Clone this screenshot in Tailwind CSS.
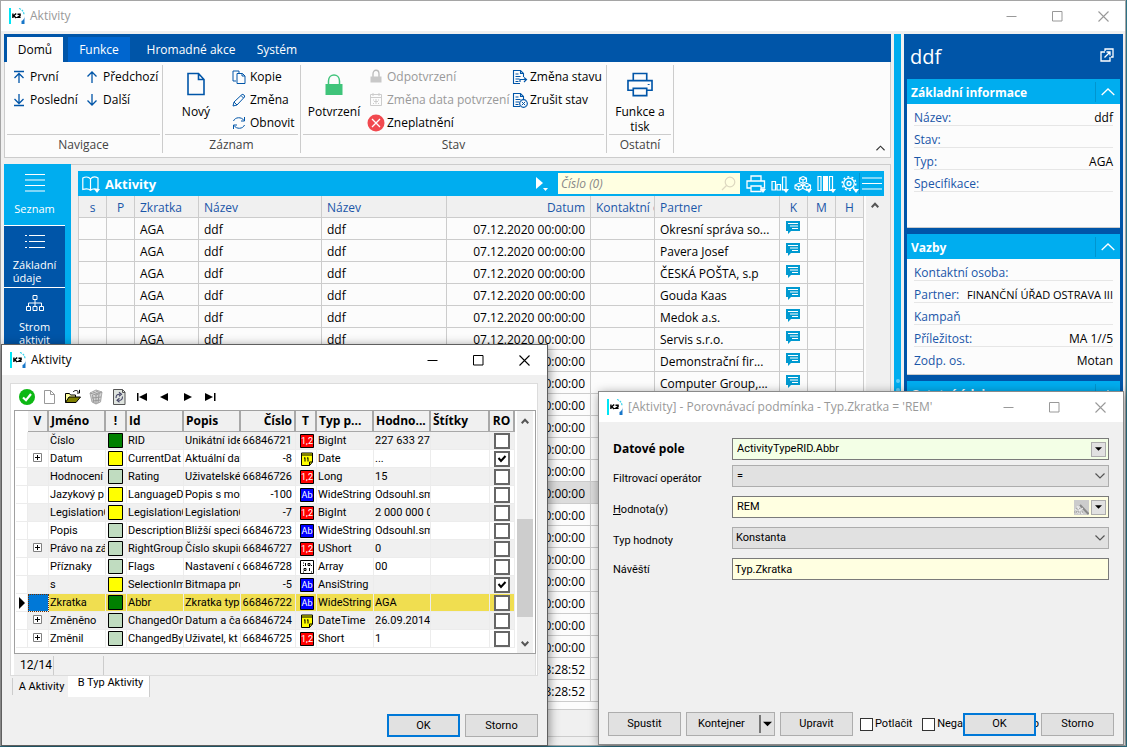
<!DOCTYPE html>
<html lang="cs">
<head>
<meta charset="utf-8">
<title>Aktivity</title>
<meta name="viewport" content="width=device-width, initial-scale=1">
<script src="https://cdn.jsdelivr.net/npm/@tailwindcss/browser@4"></script>
</head>
<body class="relative h-screen overflow-hidden bg-[#2d7286] font-['Open_Sans','Noto_Sans',sans-serif] text-[12px] leading-4 text-black">

<svg class="hidden" aria-hidden="true">
  <symbol id="k2" viewBox="0 0 16 16">
    <path d="M0 0h2v16H0z" fill="#00e5f5"/>
    <path d="M10 .5c3 1 5 3 5 6.500" fill="none" stroke="#2fd0ea" stroke-width="1.200" stroke-dasharray="2 1"/>
    <path d="M15.500 8c0 2.500-1 4-3 5v3h3z" fill="#1877c9"/>
    <path d="M3.900 5.500v4.500M7.200 5.500L4.700 7.700l2.500 2.300M8.500 6.200h2.600v1.400l-2.500 1.800h3" fill="none" stroke="#000" stroke-width="1.400"/>
  </symbol>
  <symbol id="up" viewBox="0 0 14 14"><path d="M7 13V2M2.500 6.500L7 2l4.500 4.500" fill="none" stroke="#0055a8" stroke-width="1.300"/></symbol>
  <symbol id="down" viewBox="0 0 14 14"><path d="M7 1v11M2.500 7.500L7 12l4.500-4.500" fill="none" stroke="#0055a8" stroke-width="1.300"/></symbol>
  <symbol id="first" viewBox="0 0 14 14"><path d="M2 1.500h10M7 13V3.500M2.500 8L7 3.500 11.500 8" fill="none" stroke="#0055a8" stroke-width="1.300"/></symbol>
  <symbol id="last" viewBox="0 0 14 14"><path d="M2 12.500h10M7 1v9.500M2.500 6L7 10.500 11.500 6" fill="none" stroke="#0055a8" stroke-width="1.300"/></symbol>
  <symbol id="print" viewBox="0 0 28 26"><path d="M7 8V1.500h14V8M6.500 19H1.500V9h25v10h-5M7 17h14v7.500H7z" fill="none" stroke="currentColor" stroke-width="1.700"/><path d="M22 13h2" stroke="currentColor"/></symbol>
  <symbol id="docl" viewBox="0 0 16 16"><path d="M11.500 8V4.500L8.500 1.500H1.500v13H8M8.500 1.500v3h3M3.500 5h3M3.500 7.500h5M3.500 10h4M3.500 12.500h3" fill="none" stroke="#0055a8" stroke-width="1.100"/></symbol>
  <symbol id="note" viewBox="0 0 14 13"><path d="M0 0h14v10H5l-3 3v-3H0z" fill="#0099d0"/><path d="M2 2.500h10M4 5h8M6 7.500h6" stroke="#fff"/></symbol>
  <symbol id="caretup" viewBox="0 0 14 8"><path d="M.7 7L7 1l6.300 6" fill="none" stroke="#fff" stroke-width="1.300"/></symbol>
  <symbol id="min" viewBox="0 0 11 11"><path d="M.5 5.500h10" stroke="currentColor"/></symbol>
  <symbol id="max" viewBox="0 0 11 11"><path d="M.5.5h9.500V10H.5z" fill="none" stroke="currentColor"/></symbol>
  <symbol id="close" viewBox="0 0 11 11"><path d="M.5.5l10 10M10.500.5l-10 10" stroke="currentColor" stroke-width="1.100"/></symbol>
  <symbol id="chev" viewBox="0 0 10 6"><path d="M.5.5L5 5 9.500.5" fill="none" stroke="currentColor" stroke-width="1.200"/></symbol>
  <symbol id="chevb" viewBox="0 0 8 6"><path d="M.7.800L4 4.200 7.300.8" fill="none" stroke="currentColor" stroke-width="2"/></symbol>
  <symbol id="tri" viewBox="0 0 8 4"><path d="M0 0h8L4 4z" fill="currentColor"/></symbol>
</svg>

<!-- Main window -->
<div class="mr-px flex h-[calc(100%-1px)] flex-col border border-[#a5a5a5] bg-[#f0f0f0]">
  <header class="flex h-[30px] shrink-0 items-center bg-white pl-2 text-[#999]">
    <svg class="size-4"><use href="#k2"/></svg>
    <h1 class="ml-[5px] flex-1">Aktivity</h1>
    <div class="flex gap-[35px] pr-4">
      <button aria-label="Minimalizovat"><svg class="size-[11px]"><use href="#min"/></svg></button>
      <button aria-label="Maximalizovat"><svg class="size-[11px]"><use href="#max"/></svg></button>
      <button aria-label="Zavřít"><svg class="size-[11px]"><use href="#close"/></svg></button>
    </div>
  </header>

  <div class="flex min-h-0 flex-1 pt-[3px] pr-[2px] pl-[3px]">
    <div class="flex min-w-0 flex-1 flex-col">
      <!-- Ribbon -->
      <nav class="flex h-7 shrink-0 items-stretch bg-[#0055a8] pt-[3px] pl-[3px] text-white">
        <button class="w-14 bg-[#fcfcfc] text-black">Domů</button>
        <button class="ml-[5px] w-[62px] bg-[#0066cf]">Funkce</button>
        <button class="w-[122px]">Hromadné akce</button>
        <button class="w-[50px]">Systém</button>
      </nav>
      <div class="flex h-[96px] shrink-0 items-stretch border-r border-b border-l border-[#ccc] bg-[#fcfcfc] pt-[3px] pb-1 pl-[2px]">
        <section class="flex w-[156px] flex-col border-r border-[#ccc] pr-[2px]">
          <div class="grid flex-1 grid-cols-[73px_1fr] content-start gap-y-[7px] border-b border-[#ccc] pt-1 pl-[5px]">
            <button class="flex items-center gap-1"><svg class="size-[14px]"><use href="#first"/></svg>První</button>
            <button class="flex items-center gap-1"><svg class="size-[14px]"><use href="#up"/></svg>Předchozí</button>
            <button class="flex items-center gap-1"><svg class="size-[14px]"><use href="#last"/></svg>Poslední</button>
            <button class="flex items-center gap-1"><svg class="size-[14px]"><use href="#down"/></svg>Další</button>
          </div>
          <div class="pt-[2px] text-center text-[#444]">Navigace</div>
        </section>
        <section class="flex w-[138px] flex-col border-r border-[#ccc] px-[2px]">
          <div class="flex flex-1 border-b border-[#ccc]">
            <button class="flex w-[62px] flex-col items-center pt-[7px]">
              <svg class="mb-2 h-6 w-[18px]" viewBox="0 0 18 24"><path d="M1 1.500h10.500l5.500 6v15H1zM11.500 1.500v6H17" fill="none" stroke="#0055a8" stroke-width="1.600"/></svg>Nový
            </button>
            <div class="flex flex-col gap-[7px] pt-1 pl-[5px]">
              <button class="flex items-center gap-1"><svg class="size-[14px]" viewBox="0 0 14 14"><path d="M4 11H1V1h6v2M5 3.500h5.500L13 6v7.500H5zM10 3.500V6h3" fill="none" stroke="#0055a8"/></svg>Kopie</button>
              <button class="flex items-center gap-1"><svg class="size-[14px]" viewBox="0 0 14 14"><path d="M1 13l1-4L10 1.500c1-.8 3.300 1.300 2.500 2.500L5 12zM2 9l3 3M9 2.500L11.500 5" fill="none" stroke="#0055a8"/></svg>Změna</button>
              <button class="flex items-center gap-1"><svg class="size-[14px]" viewBox="0 0 14 14"><path d="M1.500 5C3 1 9.500.5 12 4.500M12.500 1v4H9M12.500 9C11 13 4.500 13.500 2 9.500M1.500 13V9H5" fill="none" stroke="#0055a8"/></svg>Obnovit</button>
            </div>
          </div>
          <div class="pt-[2px] text-center text-[#444]">Záznam</div>
        </section>
        <section class="flex w-[306px] flex-col border-r border-[#ccc] px-[2px]">
          <div class="flex flex-1 border-b border-[#ccc]">
            <button class="flex w-[62px] flex-col items-center pt-[8px]">
              <svg class="mb-[7px] h-6 w-[18px]" viewBox="0 0 18 24"><path d="M3.500 11V8c0-8 11-8 11 0v3" fill="none" stroke="#3fc47a" stroke-width="1.500"/><path d="M.5 11h17v11H.5z" fill="#3fc47a"/></svg>Potvrzení
            </button>
            <div class="flex w-[147px] flex-col gap-[7px] pt-1 pl-[3px]">
              <button class="flex items-center gap-[3px] text-[#999]" disabled><svg class="size-4" viewBox="0 0 16 16"><path d="M5 8V5c0-5 6-5 6 0v3" fill="none" stroke="#bbb" stroke-width="1.300"/><path d="M2.500 7.500h11v6h-11z" fill="#c8c8c8"/></svg>Odpotvrzení</button>
              <button class="flex items-center gap-[3px] whitespace-nowrap text-[#999]" disabled><svg class="size-4 shrink-0" viewBox="0 0 16 16"><path d="M2.500 2.500h11v11h-11zM2.500 5.500h11M5 1v3M11 1v3" fill="none" stroke="#ccc"/><path d="M5 8h1M10 8h1M8 7v5M6 9.500h4M5 11.500h1M10 11.500h1" stroke="#ccc"/></svg>Změna data potvrzení</button>
              <button class="flex items-center gap-[3px]"><svg class="size-4 overflow-visible" viewBox="0 0 16 16"><circle cx="8" cy="8" r="8.500" fill="#f1494f"/><path d="M4 4l8 8M12 4l-8 8" stroke="#fff" stroke-width="1.300"/></svg>Zneplatnění</button>
            </div>
            <div class="flex flex-col gap-[7px] pt-1">
              <button class="flex items-center gap-[2px]"><svg class="size-4" viewBox="0 0 16 16"><use href="#docl"/><path d="M8 13V10.500h6M12 8.500l2.500 2-2.500 2.500" fill="none" stroke="#0055a8" stroke-width="1.200"/></svg>Změna stavu</button>
              <button class="flex items-center gap-[2px]"><svg class="size-4" viewBox="0 0 16 16"><use href="#docl"/><circle cx="11.500" cy="11.500" r="3.800" fill="#fff" stroke="#0055a8" stroke-width="1.200"/><path d="M9.700 9.700l3.600 3.600M13.300 9.700l-3.600 3.600" stroke="#0055a8"/></svg>Zrušit stav</button>
            </div>
          </div>
          <div class="pt-[2px] text-center text-[#444]">Stav</div>
        </section>
        <section class="flex w-[67px] flex-col border-r border-[#ccc] px-[2px]">
          <div class="flex flex-1 border-b border-[#ccc]">
            <button class="flex w-full flex-col items-center pt-[7px] leading-[15px]">
              <svg class="mb-[7px] h-[25px] w-7 text-[#0055a8]"><use href="#print"/></svg>Funkce a tisk
            </button>
          </div>
          <div class="pt-[2px] text-center text-[#444]">Ostatní</div>
        </section>
        <button class="mt-auto mr-[5px] mb-[2px] ml-auto" aria-label="Sbalit pás"><svg class="h-[6px] w-[9px] rotate-180 text-[#333]"><use href="#chev"/></svg></button>
      </div>

      <!-- Workspace -->
      <div class="mt-[6px] flex min-h-0 flex-1">
        <aside class="flex w-[67px] shrink-0 flex-col bg-[#00adef] pr-[6px] text-[11px] leading-[13px] text-white">
          <button class="flex h-[61px] shrink-0 flex-col items-center pt-[10px]">
            <svg class="mb-[10px] h-[18px] w-5" viewBox="0 0 20 18"><path d="M0 .5h20M0 6h20M0 11.500h20M0 17h20" stroke="#fff" stroke-width="1.200"/></svg>Seznam
          </button>
          <button class="flex h-[62px] shrink-0 flex-col items-center border-t border-white bg-[#0055a8] pt-2 text-left">
            <svg class="mb-[9px] h-[15px] w-5" viewBox="0 0 20 15"><path d="M4 1.500h16M4 7.500h16M4 13.500h16M0 1.500h2M0 7.500h2M0 13.500h2" stroke="#fff" stroke-width="1.200"/></svg><span>Základní<br>údaje</span>
          </button>
          <button class="flex flex-1 flex-col items-center border-t border-white bg-[#0055a8] pt-[7px]">
            <svg class="mb-[9px] h-4 w-[18px]" viewBox="0 0 18 16"><path d="M7 .5h4v4H7zM.5 11.500h4v4h-4zM7 11.500h4v4H7zM13.500 11.500h4v4h-4zM9 4.500v7M2.500 11.500V8h13v3.500" fill="none" stroke="#fff"/></svg><span>Strom<br>aktivit</span>
          </button>
        </aside>

        <main class="flex min-w-0 flex-1 flex-col border-t border-r border-[#ccc] pt-[6px] pr-[6px] pl-[7px]">
          <div class="flex h-[25px] shrink-0 items-center bg-[#00adef] pl-1 text-white">
            <svg class="mt-px h-[17px] w-[19px]" viewBox="0 0 19 17"><path d="M8.500 3C6.500.5 3 .8.800 2v11.500c3-1 6-.8 7.700.8 1.700-1.600 4-1.800 7.500-.8V2C13.800.8 10.500.5 8.500 3zV14" fill="none" stroke="#fff" stroke-width="1.200"/><path d="M12 13h6l-3 4z" fill="#fff"/></svg>
            <h2 class="ml-1 flex-1 text-[13px] font-bold">Aktivity</h2>
            <button aria-label="Spustit filtr" class="mr-[10px]"><svg class="h-[15px] w-3" viewBox="0 0 12 15"><path d="M0 1l7 6-7 6z" fill="#fff"/><path d="M7 12h5l-2.500 3z" fill="#fff"/></svg></button>
            <label class="mr-[6px] flex h-[21px] w-[182px] items-center bg-[#ffffe1] pr-1">
              <input aria-label="Vyhledat" placeholder="Číslo (0)" class="w-full min-w-0 bg-transparent pl-[3px] italic outline-none placeholder:text-[#888]">
              <svg class="size-[15px] shrink-0" viewBox="0 0 15 15"><circle cx="9" cy="6" r="4.800" fill="none" stroke="#ddd8c0" stroke-width="1.200"/><path d="M5.500 9.500L1 14" stroke="#ddd8c0" stroke-width="1.200"/></svg>
            </label>
            <div class="flex items-center gap-[5px]">
              <button aria-label="Tisk"><svg class="block h-[18px] w-5" viewBox="0 0 20 18"><path d="M5 6V1h10v5M4.500 13H1V6h17.500v7H15M5 11h10v5.500H5z" fill="none" stroke="#fff" stroke-width="1.300"/><path d="M14 14h6l-3 4z" fill="#fff"/></svg></button>
              <button aria-label="Grafy"><svg class="block h-[18px] w-[18px]" viewBox="0 0 18 18"><path d="M1 6.500h3.500V15H1zM6 9.500h3.500V15H6zM11.500 2H15v13h-3.500z" fill="none" stroke="#fff" stroke-width="1.200"/><path d="M12 14h6l-3 4z" fill="#fff"/></svg></button>
              <button aria-label="Krychle"><svg class="block h-[18px] w-[18px]" viewBox="0 0 18 18"><path d="M9 1.500l3.500 1.700v3.500L9 8.500 5.500 6.700V3.200zM4.700 8.300L8.500 10v3.500l-3.800 1.800L1 13.500V10zM12.800 8.300L16.500 10v3.500l-3.700 1.800L9 13.500V10zM5.500 3.200L9 5l3.500-1.800M9 5v3M1 10l3.700 1.800L8.500 10M4.700 11.800v3M9 10l3.800 1.800L16.500 10M12.800 11.800v3" fill="none" stroke="#fff" stroke-width="1.100"/><path d="M12 14h6l-3 4z" fill="#fff"/></svg></button>
              <button aria-label="Sloupce"><svg class="block h-[18px] w-[19px]" viewBox="0 0 19 18"><path d="M1 1.500h3v14H1zM12.500 1.500h3v14h-3z" fill="none" stroke="#fff" stroke-width="1.200"/><path d="M6 1h5v15H6zM13 14h6l-3 4z" fill="#fff"/></svg></button>
              <button aria-label="Nastavení"><svg class="block h-[18px] w-[18px]" viewBox="0 0 18 18"><circle cx="8" cy="8.500" r="5.300" fill="none" stroke="#fff" stroke-width="1.300"/><circle cx="8" cy="8.500" r="6.800" fill="none" stroke="#fff" stroke-width="1.500" stroke-dasharray="2 2.300"/><circle cx="8" cy="8.500" r="2" fill="none" stroke="#fff" stroke-width="1.300"/><path d="M12 14h6l-3 4z" fill="#fff"/></svg></button>
            </div>
            <button aria-label="Nabídka" class="border-l border-[#0095cf] py-1 pr-[2px] pl-[2px]"><svg class="block h-[13px] w-5" viewBox="0 0 20 13"><path d="M0 1h20M0 6.500h20M0 12h20" stroke="#fff" stroke-width="1.200"/></svg></button>
          </div>
          <div class="flex min-h-0 flex-1 overflow-hidden bg-[#fcfcfc]">
            <div class="min-w-0 flex-1 border-l border-[#ccc]">
              <table class="w-full table-fixed border-separate border-spacing-0">
                <colgroup><col class="w-7"><col class="w-7"><col class="w-16"><col><col class="w-[125px]"><col class="w-36"><col class="w-16"><col class="w-[125px]"><col class="w-7"><col class="w-7"><col class="w-7"></colgroup>
                <thead class="text-[#1a56a8]">
                  <tr class="h-[22px] bg-[#f0f0f0] text-left whitespace-nowrap [&>th]:overflow-hidden [&>th]:border-r [&>th]:border-b [&>th]:border-[#ccc] [&>th]:px-[5px] [&>th]:pt-[2px] [&>th]:pb-0 [&>th]:font-normal">
                    <th class="text-center">s</th><th class="text-center">P</th><th>Zkratka</th><th>Název</th><th>Název</th><th class="text-right">Datum</th><th>Kontaktní osoba</th><th>Partner</th><th class="text-center">K</th><th class="text-center">M</th><th class="text-center">H</th>
                  </tr>
                </thead>
                <tbody id="activities"></tbody>
              </table>
            </div>
            <div class="ml-[2px] flex w-[18px] flex-col items-center bg-[#f0f0f0] pt-[6px] text-[#555]"><svg class="h-[6px] w-2 rotate-180"><use href="#chevb"/></svg></div>
          </div>
          <div class="mb-2 h-7 shrink-0 border-y border-[#ccc]"></div>
        </main>
      </div>
    </div>

    <div class="mx-[3px] flex w-[7px] shrink-0 flex-col items-center justify-center gap-[5px] bg-[#00adef]">
      <i class="size-1 rounded-full bg-[#5fcdf7]"></i><i class="size-1 rounded-full bg-[#5fcdf7]"></i><i class="size-1 rounded-full bg-[#5fcdf7]"></i>
    </div>

    <!-- Detail panel -->
    <aside class="flex w-[219px] shrink-0 flex-col bg-[#0055a8] px-[3px]">
      <div class="flex h-[45px] items-center justify-between pr-[6px] pl-[3px] text-white">
        <h2 class="text-xl">ddf</h2>
        <button aria-label="Otevřít v novém okně" class="pb-1"><svg class="size-[14px]" viewBox="0 0 14 14"><path d="M5 3V1h8v8h-2M5 4H1v9h9V9M4.500 9.500L10 4M6.500 4H10v3.500" fill="none" stroke="#fff" stroke-width="1.300"/></svg></button>
      </div>
      <section class="mb-[6px] border-b border-[#ccc] bg-[#fcfcfc] pb-[35px]">
        <div class="flex h-[25px] items-center bg-[#00adef] pr-[5px] pl-1 text-white"><h3 class="flex-1 pt-[2px] font-bold">Základní informace</h3><button class="h-5 border-l border-[#0095cf] pl-[5px]" aria-label="Sbalit"><svg class="h-2 w-[14px]"><use href="#caretup"/></svg></button></div>
        <dl class="px-[7px] [&>div]:flex [&>div]:h-[22px] [&>div]:items-center [&>div]:justify-between [&>div]:border-b [&>div]:border-[#e6e6e6] [&>div]:pt-[7px] [&_dt]:text-[#1a56a8]">
          <div><dt>Název:</dt><dd>ddf</dd></div>
          <div><dt>Stav:</dt><dd></dd></div>
          <div><dt>Typ:</dt><dd>AGA</dd></div>
          <div><dt>Specifikace:</dt><dd></dd></div>
        </dl>
      </section>
      <section class="mb-[6px] border-b border-[#ccc] bg-[#fcfcfc] pb-[5px]">
        <div class="flex h-[25px] items-center bg-[#00adef] pr-[5px] pl-1 text-white"><h3 class="flex-1 pt-[2px] font-bold">Vazby</h3><button class="h-5 border-l border-[#0095cf] pl-[5px]" aria-label="Sbalit"><svg class="h-2 w-[14px]"><use href="#caretup"/></svg></button></div>
        <dl class="px-[7px] whitespace-nowrap [&>div]:flex [&>div]:h-[22px] [&>div]:items-center [&>div]:justify-between [&>div]:border-b [&>div]:border-[#e6e6e6] [&>div]:pt-[7px] [&>div:last-child]:border-transparent [&_dt]:text-[#1a56a8]">
          <div><dt>Kontaktní osoba:</dt><dd></dd></div>
          <div><dt>Partner:</dt><dd class="text-[11px]">FINANČNÍ ÚŘAD OSTRAVA III</dd></div>
          <div><dt>Kampaň</dt><dd></dd></div>
          <div><dt>Příležitost:</dt><dd>MA 1//5</dd></div>
          <div><dt>Zodp. os.</dt><dd>Motan</dd></div>
        </dl>
      </section>
      <section class="flex-1 bg-[#fcfcfc]">
        <div class="flex h-[25px] items-center bg-[#00adef] pr-[5px] pl-1 text-white"><h3 class="flex-1 pt-[2px] font-bold">Ostatní údaje</h3><button class="h-5 border-l border-[#0095cf] pl-[5px]" aria-label="Sbalit"><svg class="h-2 w-[14px]"><use href="#caretup"/></svg></button></div>
      </section>
    </aside>
  </div>
</div>

<!-- Field picker window -->
<div class="absolute top-[344px] left-px flex h-[402px] w-[547px] flex-col border border-[#5f5f5f] bg-[#f0f0f0] font-[Roboto,sans-serif] text-[11px] shadow-[1px_2px_10px_rgba(0,0,0,0.45)]">
  <header class="flex h-[30px] shrink-0 items-center bg-white pl-2">
    <svg class="size-4"><use href="#k2"/></svg>
    <h2 class="ml-[5px] flex-1 font-['Open_Sans',sans-serif] text-[12px]">Aktivity</h2>
    <div class="flex gap-[35px] pr-[17px]">
      <button aria-label="Minimalizovat"><svg class="size-[11px]"><use href="#min"/></svg></button>
      <button aria-label="Maximalizovat"><svg class="size-[11px]"><use href="#max"/></svg></button>
      <button aria-label="Zavřít"><svg class="size-[11px]"><use href="#close"/></svg></button>
    </div>
  </header>
  <div class="mt-2 mr-[9px] ml-2 border border-[#dcdcdc] bg-white pl-[3px]">
    <div class="flex h-[26px] items-center gap-[7px] pl-[5px]">
      <button aria-label="Potvrdit"><svg class="block size-4" viewBox="0 0 16 16"><circle cx="8" cy="8" r="8" fill="#0db814"/><path d="M4 8.500l3 2.700L12 5" fill="none" stroke="#fff" stroke-width="2.200"/></svg></button>
      <button aria-label="Nový"><svg class="block size-4" viewBox="0 0 16 16"><path d="M2.500 1.500h6l4 4v9h-10zM8.500 1.500v4h4" fill="#fff" stroke="#999"/></svg></button>
      <button aria-label="Otevřít"><svg class="block size-4" viewBox="0 0 16 16"><path d="M.5 13.500v-9h4l1 1.500h5v2" fill="#ffffa0" stroke="#000"/><path d="M.5 13.500L4 8h11.500L11 13.500z" fill="#808000" stroke="#000"/><path d="M8 3c2-2 4-2 5.500 0M14.500.8V4H12" fill="none" stroke="#000"/></svg></button>
      <button aria-label="Koš"><svg class="block size-4" viewBox="0 0 16 16"><path d="M2 4l6-3 6 2-1.500 10L8 15l-4-2z" fill="#d4d4d4" stroke="#aaa"/><path d="M2 4l6 2 6-3M4.500 6l1.500 8M11 5l-1 9M8 6v9M5 3l5 2M8 2l4 2M4 9l9-1M4.500 12l8-1" stroke="#999" fill="none"/></svg></button>
      <button aria-label="Obnovit"><svg class="block size-4" viewBox="0 0 16 16"><path d="M2.500.5h9l2.500 2.500v12.500H2.500z" fill="#dfe4df" stroke="#555"/><path d="M11.500.5v3H14" fill="none" stroke="#555"/><path d="M5 9C5 6 6.500 5 9 5.200M8 3.200l2.500 2L8 7.200M11.500 7.500c0 3-1.500 4-4 3.800M8.500 9.200L6 11.300l2.500 2" fill="none" stroke="#446" stroke-width="1.100"/></svg></button>
      <button aria-label="První"><svg class="block size-4" viewBox="0 0 16 16"><path d="M3 4h1.500v8H3zM13 4v8L5 8z"/></svg></button>
      <button aria-label="Předchozí"><svg class="block size-4" viewBox="0 0 16 16"><path d="M11 4v8L3 8z"/></svg></button>
      <button aria-label="Další"><svg class="block size-4" viewBox="0 0 16 16"><path d="M4 4v8l8-4z"/></svg></button>
      <button aria-label="Poslední"><svg class="block size-4" viewBox="0 0 16 16"><path d="M2 4v8l8-4zM11 4h1.500v8H11z"/></svg></button>
    </div>
    <div class="mr-px flex items-start border border-[#a0a0a0] bg-white pl-px">
      <table class="w-[499px] table-fixed border-separate border-spacing-0">
        <colgroup><col class="w-3"><col class="w-[21px]"><col class="w-[57px]"><col class="w-[21px]"><col class="w-[57px]"><col class="w-[57px]"><col class="w-[55px]"><col class="w-[21px]"><col class="w-[57px]"><col class="w-[57px]"><col class="w-[59px]"><col class="w-[25px]"></colgroup>
        <thead>
          <tr class="h-[21px] text-left font-['Open_Sans',sans-serif] text-[12px] leading-[18px] whitespace-nowrap [&>th]:overflow-hidden [&>th]:p-0 [&>th+th]:border-r-2 [&>th+th]:border-b [&>th+th]:border-[#a8a8a8] [&>th+th]:bg-[#f0f0f0] [&>th+th]:px-[2px]">
            <th aria-label="Ukazatel"></th><th class="text-center">V</th><th>Jméno</th><th class="text-center">!</th><th>Id</th><th>Popis</th><th class="text-right">Číslo</th><th class="text-center">T</th><th>Typ p...</th><th>Hodno...</th><th>Štítky</th><th class="text-center">RO</th>
          </tr>
        </thead>
        <tbody id="fields"></tbody>
      </table>
      <div class="mr-[2px] ml-[2px] flex h-[242px] w-4 flex-col items-center bg-[#f0f0f0] pt-[7px] text-[#555]">
        <svg class="h-[6px] w-2 rotate-180"><use href="#chevb"/></svg>
        <div class="mt-[95px] h-[98px] w-full bg-[#cdcdcd]"></div>
        <svg class="mt-auto mb-[6px] h-[6px] w-2"><use href="#chevb"/></svg>
      </div>
    </div>
    <div class="mr-px flex h-[21px] items-stretch border-r border-[#dcdcdc] bg-[#f0f0f0] pt-[2px] text-[12px]">
      <span class="w-10 border-r border-[#ccc] pl-[6px] leading-[19px]">12/14</span><span class="w-[50px] border-r border-[#ccc]"></span>
    </div>
  </div>
  <div class="ml-[10px] flex items-start" role="tablist">
    <button role="tab" class="mt-[2px] h-[17px] w-14 border-l border-[#ccc] pl-[2px] whitespace-nowrap">A Aktivity</button>
    <button role="tab" class="h-[21px] w-[82px] border-r border-[#ccc] bg-white pb-2 pl-1 leading-[13px] whitespace-nowrap">B Typ Aktivity</button>
  </div>
  <div class="mt-auto mr-[9px] mb-2 flex justify-end gap-[5px]">
    <button class="h-[23px] w-[73px] border-2 border-[#0078d7] bg-[#e1e1e1]">OK</button>
    <button class="h-[23px] w-[73px] border border-[#adadad] bg-[#e1e1e1]">Storno</button>
  </div>
</div>

<!-- Comparison condition window -->
<div class="absolute top-[391px] left-[598px] flex h-[354px] w-[526px] flex-col border border-[#8a8a8a] bg-[#f0f0f0] font-[Roboto,sans-serif] text-[11px] shadow-[1px_2px_10px_rgba(0,0,0,0.4)]">
  <header class="flex h-[30px] shrink-0 items-center bg-white pl-2 text-[#999]">
    <svg class="size-4"><use href="#k2"/></svg>
    <h2 class="ml-[5px] flex-1 font-['Open_Sans',sans-serif] text-[12px]">[Aktivity] - Porovnávací podmínka - Typ.Zkratka = 'REM'</h2>
    <div class="flex gap-[35px] pr-[17px]">
      <button aria-label="Minimalizovat"><svg class="size-[11px]"><use href="#min"/></svg></button>
      <button aria-label="Maximalizovat"><svg class="size-[11px]"><use href="#max"/></svg></button>
      <button aria-label="Zavřít"><svg class="size-[11px]"><use href="#close"/></svg></button>
    </div>
  </header>
  <form class="flex flex-1 flex-col">
    <div class="grid grid-cols-[119px_1fr] items-center gap-y-[9px] pt-4 pr-[14px] pl-[14px]">
      <label for="f1" class="font-['Open_Sans',sans-serif] text-[12px] font-bold">Datové pole</label>
      <div class="flex h-[22px] items-center border border-[#7a7a7a] bg-[#f3ffe6] pr-[2px]">
        <input id="f1" value="ActivityTypeRID.Abbr" class="min-w-0 flex-1 pl-1 outline-none">
        <button type="button" aria-label="Vybrat pole" class="flex size-[15px] items-center justify-center border border-[#adadad] bg-[#e1e1e1]"><svg class="h-1 w-[7px]"><use href="#tri"/></svg></button>
      </div>
      <label for="f2" class="pt-[2px]">Filtrovací operátor</label>
      <div class="-mt-1 grid items-center">
        <select id="f2" class="col-start-1 row-start-1 h-[22px] w-full appearance-none rounded-none border border-[#adadad] bg-[#e1e1e1] pl-1"><option>=</option></select>
        <svg class="pointer-events-none col-start-1 row-start-1 mr-1 h-[6px] w-[10px] justify-self-end text-[#555]"><use href="#chev"/></svg>
      </div>
      <label for="f3" class="pt-[6px]"><u>H</u>odnota(y)</label>
      <div class="flex h-[22px] items-center gap-[2px] border border-[#7a7a7a] bg-[#ffffe1] pr-[2px]">
        <input id="f3" value="REM" class="min-w-0 flex-1 pl-1 outline-none">
        <button type="button" aria-label="Průvodce" class="size-[15px] bg-[#ccc]"><svg class="block size-[15px]" viewBox="0 0 15 15"><path d="M6 5l8.500 9" stroke="#888" stroke-width="2"/><path d="M1 9l8 5M3 6l5 8M9 8l-8 6M5 6v8" stroke="#f0f0f0"/><path d="M2 8l5 6M0 12h9M6 8l-5 6" stroke="#999" stroke-dasharray="1 1"/></svg></button>
        <button type="button" aria-label="Vybrat hodnotu" class="flex size-[15px] items-center justify-center border border-[#adadad] bg-[#e1e1e1]"><svg class="h-1 w-[7px]"><use href="#tri"/></svg></button>
      </div>
      <label for="f4" class="pt-[6px]">Typ hodnoty</label>
      <div class="grid items-center">
        <select id="f4" class="col-start-1 row-start-1 h-[22px] w-full appearance-none rounded-none border border-[#adadad] bg-[#e1e1e1] pl-[3px]"><option>Konstanta</option></select>
        <svg class="pointer-events-none col-start-1 row-start-1 mr-1 h-[6px] w-[10px] justify-self-end text-[#555]"><use href="#chev"/></svg>
      </div>
      <label for="f5" class="pt-[2px]">Návěští</label>
      <input id="f5" value="Typ.Zkratka" class="h-[22px] w-full border border-[#7a7a7a] bg-[#ffffe1] pl-[2px] outline-none">
    </div>
    <div class="mt-auto mb-2 flex items-center gap-[5px] pr-[9px] pl-[9px]">
      <button type="button" class="h-6 w-[73px] border border-[#adadad] bg-[#e1e1e1]">Spustit</button>
      <button type="button" class="flex h-6 w-[89px] items-center justify-between border border-[#adadad] bg-[#e1e1e1] pr-[2px] pl-[11px]">Kontejner<span class="flex h-[18px] items-center border-l-2 border-[#777] pl-[2px]"><svg class="h-[6px] w-[9px]"><use href="#tri"/></svg></span></button>
      <button type="button" class="h-6 w-[73px] border border-[#adadad] bg-[#e1e1e1]">Upravit</button>
      <label class="ml-[2px] flex items-center gap-[2px]"><input type="checkbox" class="size-[13px] appearance-none border border-[#333] bg-white">Potlačit</label>
      <label class="ml-auto flex items-center gap-[2px]"><input type="checkbox" class="size-[13px] appearance-none border border-[#333] bg-white">Nega</label>
      <div class="-ml-[5px] flex items-center">
        <button type="button" class="h-[23px] w-[73px] border-2 border-[#0078d7] bg-[#e1e1e1]">OK</button>
        <span class="flex w-[3px] justify-end overflow-hidden">o</span>
        <button type="button" class="ml-[2px] h-[23px] w-[73px] border border-[#adadad] bg-[#e1e1e1]">Storno</button>
      </div>
    </div>
  </form>
</div>

<script>
const partners = ['Okresní správa so...', 'Pavera Josef', 'ČESKÁ POŠTA, s.p', 'Gouda Kaas', 'Medok a.s.', 'Servis s.r.o.', 'Demonstrační fir...', 'Computer Group,...'];
const note = '<svg class="ml-px -mt-[5px] block h-[13px] w-[14px]"><use href="#note"/></svg>';
let rows = '';
for (let i = 0; i < 22; i++) {
  const tone = i === 12 ? 'bg-[#dcdcdc]' : 'bg-[#fcfcfc]';
  rows += `<tr class="h-[22px] whitespace-nowrap [&>td]:overflow-hidden [&>td]:border-r [&>td]:border-b [&>td]:border-[#ccc] [&>td]:px-[5px] [&>td]:pt-[2px] [&>td]:pb-0 ${tone}">
    <td></td><td></td><td>AGA</td><td>ddf</td><td>ddf</td><td class="text-right">07.12.2020 ${i < 20 ? '00:00:00' : '13:28:52'}</td><td></td><td>${partners[i] || ''}</td><td>${note}</td><td></td><td></td></tr>`;
}
document.getElementById('activities').innerHTML = rows;

const marks = { g: '#008000', y: '#ffff00', l: '#c0dcc0' };
const types = {
  n: '<svg class="mx-auto block size-[14px]" viewBox="0 0 14 14"><path d="M.5.5h13v13H.5z" fill="#f00" stroke="#000"/><text x="7" y="10" font-size="9" text-anchor="middle" fill="#fff">1,2</text></svg>',
  s: '<svg class="mx-auto block size-[14px]" viewBox="0 0 14 14"><path d="M.5.5h13v13H.5z" fill="#00f" stroke="#000"/><text x="7" y="10" font-size="9" text-anchor="middle" fill="#fff">Ab</text></svg>',
  d: '<svg class="mx-auto block size-[14px]" viewBox="0 0 14 14"><path d="M1.500 1h11v9l-3 3.500h-8z" fill="#ff0" stroke="#000"/><path d="M1 3h12M9.500 13.500V10h3M5 5.500v4M4 6h1M8 5.500v4M7 6h1" fill="none" stroke="#000"/></svg>',
  a: '<svg class="mx-auto block size-[14px]" viewBox="0 0 14 14"><path d="M.5.5h13v13H.5z" fill="#fff" stroke="#000"/><path d="M5.500 3v3M8 3.500h2v2H8zM4 8.500h2v2H4zM9.500 8v3M3 3h1M3 5.500h1M12 5.500h-1M3 12h1M11 12h1" fill="none" stroke="#000"/></svg>'
};
const data = [
  [0, 'Číslo', 'g', 'RID', 'Unikátní ide', '66846721', 'n', 'BigInt', '227 633 27', 0],
  [1, 'Datum', 'y', 'CurrentDat', 'Aktuální dat', '-8', 'd', 'Date', '...', 1],
  [0, 'Hodnocení', 'l', 'Rating', 'Uživatelské', '66846726', 'n', 'Long', '15', 0],
  [0, 'Jazykový p', 'y', 'LanguageD', 'Popis s mož', '-100', 's', 'WideString', 'Odsouhl.sm', 0],
  [0, 'LegislationC', 'y', 'LegislationC', 'LegislationC', '-7', 'n', 'BigInt', '2 000 000 0', 0],
  [0, 'Popis', 'l', 'Description', 'Bližší specifi', '66846723', 's', 'WideString', 'Odsouhl.sm', 0],
  [1, 'Právo na zá', 'l', 'RightGroup', 'Číslo skupin', '66846727', 'n', 'UShort', '0', 0],
  [0, 'Příznaky', 'l', 'Flags', 'Nastavení d', '66846728', 'a', 'Array', '00', 0],
  [0, 's', 'y', 'SelectionIm', 'Bitmapa pro', '-5', 's', 'AnsiString', '', 1],
  [0, 'Zkratka', 'g', 'Abbr', 'Zkratka typ', '66846722', 's', 'WideString', 'AGA', 0],
  [1, 'Změněno', 'l', 'ChangedOn', 'Datum a ča', '66846724', 'd', 'DateTime', '26.09.2014', 0],
  [1, 'Změnil', 'l', 'ChangedBy', 'Uživatel, kt', '66846725', 'n', 'Short', '1', 0]
];
const plus = '<svg class="ml-[4px] -mt-[2px] block size-[9px]" viewBox="0 0 9 9"><path d="M.5.5h8v8h-8z" fill="#fff" stroke="#808080"/><path d="M2 4.500h5M4.500 2v5" stroke="#000"/></svg>';
document.getElementById('fields').innerHTML = data.map((r, i) => {
  const sel = i === 9;
  const tone = sel ? '[&>td+td]:bg-[#f0de50]' : i % 2 ? 'bg-white' : '[&>td+td]:bg-[#f0f0f0]';
  return `<tr class="h-[18px] leading-[16px] whitespace-nowrap [&>td]:overflow-hidden [&>td]:border-r [&>td]:border-b [&>td]:border-[#ececec] [&>td]:py-0 [&>td]:pr-0 [&>td]:pl-px ${tone}">
    <td>${sel ? '<svg class="ml-[2px] block h-3 w-[6px]" viewBox="0 0 6 12"><path d="M0 0l6 6-6 6z"/></svg>' : ''}</td>
    ${sel ? '<td class="outline-dotted outline-1 -outline-offset-1 outline-[#703000] !bg-[#0078d7]"></td>' : `<td>${r[0] ? plus : ''}</td>`}
    <td>${r[1]}</td><td><svg class="block h-[15px] w-[17px]" viewBox="0 0 17 15"><path d="M1.500.5h14v14h-14z" fill="${marks[r[2]]}" stroke="#000"/></svg></td>
    <td>${r[3]}</td><td>${r[4]}</td><td class="text-right"><span class="mr-[3px]">${r[5]}</span></td><td>${types[r[6]]}</td><td>${r[7]}</td><td>${r[8]}</td><td></td>
    <td><input type="checkbox" aria-label="Jen pro čtení: ${r[1]}" ${r[9] ? 'checked' : ''} class="peer hidden"><svg class="ml-[3px] block size-4" viewBox="0 0 16 16"><path d="M1 1h14v14H1z" fill="#fff" stroke="#666" stroke-width="2"/>${r[9] ? '<path d="M4.500 7l2.500 3 4.500-5" fill="none" stroke="#000" stroke-width="2"/>' : ''}</svg></td></tr>`;
}).join('');
</script>
</body>
</html>
